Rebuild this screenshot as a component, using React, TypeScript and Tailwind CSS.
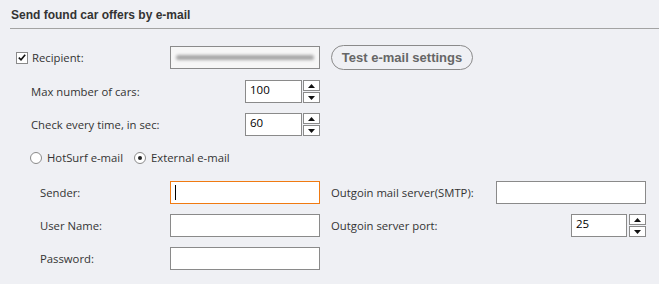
import type { ReactNode } from 'react';

const label = "font-['Open_Sans',sans-serif] text-[11.3px] text-[#333] leading-[16px]";

function TextBox({ width, value, focused, children }: { width: string; value?: string; focused?: boolean; children?: ReactNode }) {
  return (
    <div
      className={`${width} h-[23px] bg-white border flex items-center pl-[4px] pb-[3px] ${focused ? 'border-[#f07a12]' : 'border-[#8a8a8a]'}`}
    >
      {focused && <div className="w-px h-[15px] bg-black mt-[3px]" />}
      {value && <span className="font-['Open_Sans',sans-serif] text-[11.5px] text-black">{value}</span>}
      {children}
    </div>
  );
}

function Spinner() {
  return (
    <div className="w-[17px] h-[23px] flex flex-col gap-px">
      <div className="h-[11px] bg-white border border-[#8a8a8a] flex items-center justify-center">
        <svg width="7" height="4" viewBox="0 0 7 4"><path d="M3.5 0L7 4H0z" fill="#111" /></svg>
      </div>
      <div className="h-[11px] bg-white border border-[#8a8a8a] flex items-center justify-center">
        <svg width="7" height="4" viewBox="0 0 7 4"><path d="M0 0h7L3.5 4z" fill="#111" /></svg>
      </div>
    </div>
  );
}

function Radio({ checked, text }: { checked?: boolean; text: string }) {
  return (
    <div className="flex items-center">
      <div className="w-[12px] h-[12px] rounded-full bg-white border border-[#8a8a8a] flex items-center justify-center">
        {checked && <div className="w-[4px] h-[4px] rounded-full bg-[#222]" />}
      </div>
      <span className={`${label} ml-[5px]`}>{text}</span>
    </div>
  );
}

export default function App() {
  return (
    <div className="w-[659px] h-[284px] bg-[#eff0f4] overflow-hidden">
      {/* Header */}
      <div className="h-[28px] pl-[11px] pt-[8px]">
        <h1 className="font-['Liberation_Sans',Arial,sans-serif] font-bold text-[12px] leading-[14px] text-[#333]">
          Send found car offers by e-mail
        </h1>
      </div>
      <div className="ml-[10px] h-px bg-[#a3a3a3]" />

      {/* Recipient */}
      <div className="mt-[16px] h-[25px] flex items-center pl-[16px]">
        <div className="w-[154px] flex items-center">
          <div className="w-[12px] h-[12px] bg-white border border-[#8a8a8a] flex items-center justify-center">
            <svg width="8" height="7" viewBox="0 0 8 7">
              <path d="M0.8 3.6L3 5.8L7.2 0.8" fill="none" stroke="#111" strokeWidth="1.6" />
            </svg>
          </div>
          <span className={`${label} ml-[4px]`}>Recipient:</span>
        </div>
        <div className="w-[150px] h-[23px] bg-[#f6f6f6] border border-[#8a8a8a] flex items-center px-[5px]">
          <div className="w-full h-[5px] rounded-full bg-[#a6a6a6] blur-[1.5px]" />
        </div>
        <button className="ml-[11px] w-[142px] h-[25px] rounded-full border border-[#8a8a8a] font-['Liberation_Sans',Arial,sans-serif] font-bold text-[13px] text-[#666]">
          Test e-mail settings
        </button>
      </div>

      {/* Max number of cars */}
      <div className="mt-[10px] h-[23px] flex items-center pl-[31px]">
        <span className={`${label} w-[214px]`}>Max number of cars:</span>
        <TextBox width="w-[57px]" value="100" />
        <div className="ml-px"><Spinner /></div>
      </div>

      {/* Check interval */}
      <div className="mt-[10px] h-[23px] flex items-center pl-[31px]">
        <span className={`${label} w-[214px]`}>Check every time, in sec:</span>
        <TextBox width="w-[57px]" value="60" />
        <div className="ml-px"><Spinner /></div>
      </div>

      {/* Mail type */}
      <div className="mt-[14px] h-[16px] flex items-center pl-[30px] gap-[11px]">
        <Radio text="HotSurf e-mail" />
        <Radio checked text="External e-mail" />
      </div>

      {/* Sender / SMTP */}
      <div className="mt-[15px] h-[23px] flex items-center pl-[40px]">
        <span className={`${label} w-[130px]`}>Sender:</span>
        <TextBox width="w-[150px]" focused />
        <span className={`${label} ml-[11px] w-[165px]`}>Outgoin mail server(SMTP):</span>
        <TextBox width="w-[150px]" />
      </div>

      {/* User name / port */}
      <div className="mt-[10px] h-[23px] flex items-center pl-[40px]">
        <span className={`${label} w-[130px]`}>User Name:</span>
        <TextBox width="w-[150px]" />
        <span className={`${label} ml-[11px] w-[240px]`}>Outgoin server port:</span>
        <TextBox width="w-[56px]" value="25" />
        <div className="ml-[2px]"><Spinner /></div>
      </div>

      {/* Password */}
      <div className="mt-[10px] h-[23px] flex items-center pl-[40px]">
        <span className={`${label} w-[130px]`}>Password:</span>
        <TextBox width="w-[150px]" />
      </div>
    </div>
  );
}
